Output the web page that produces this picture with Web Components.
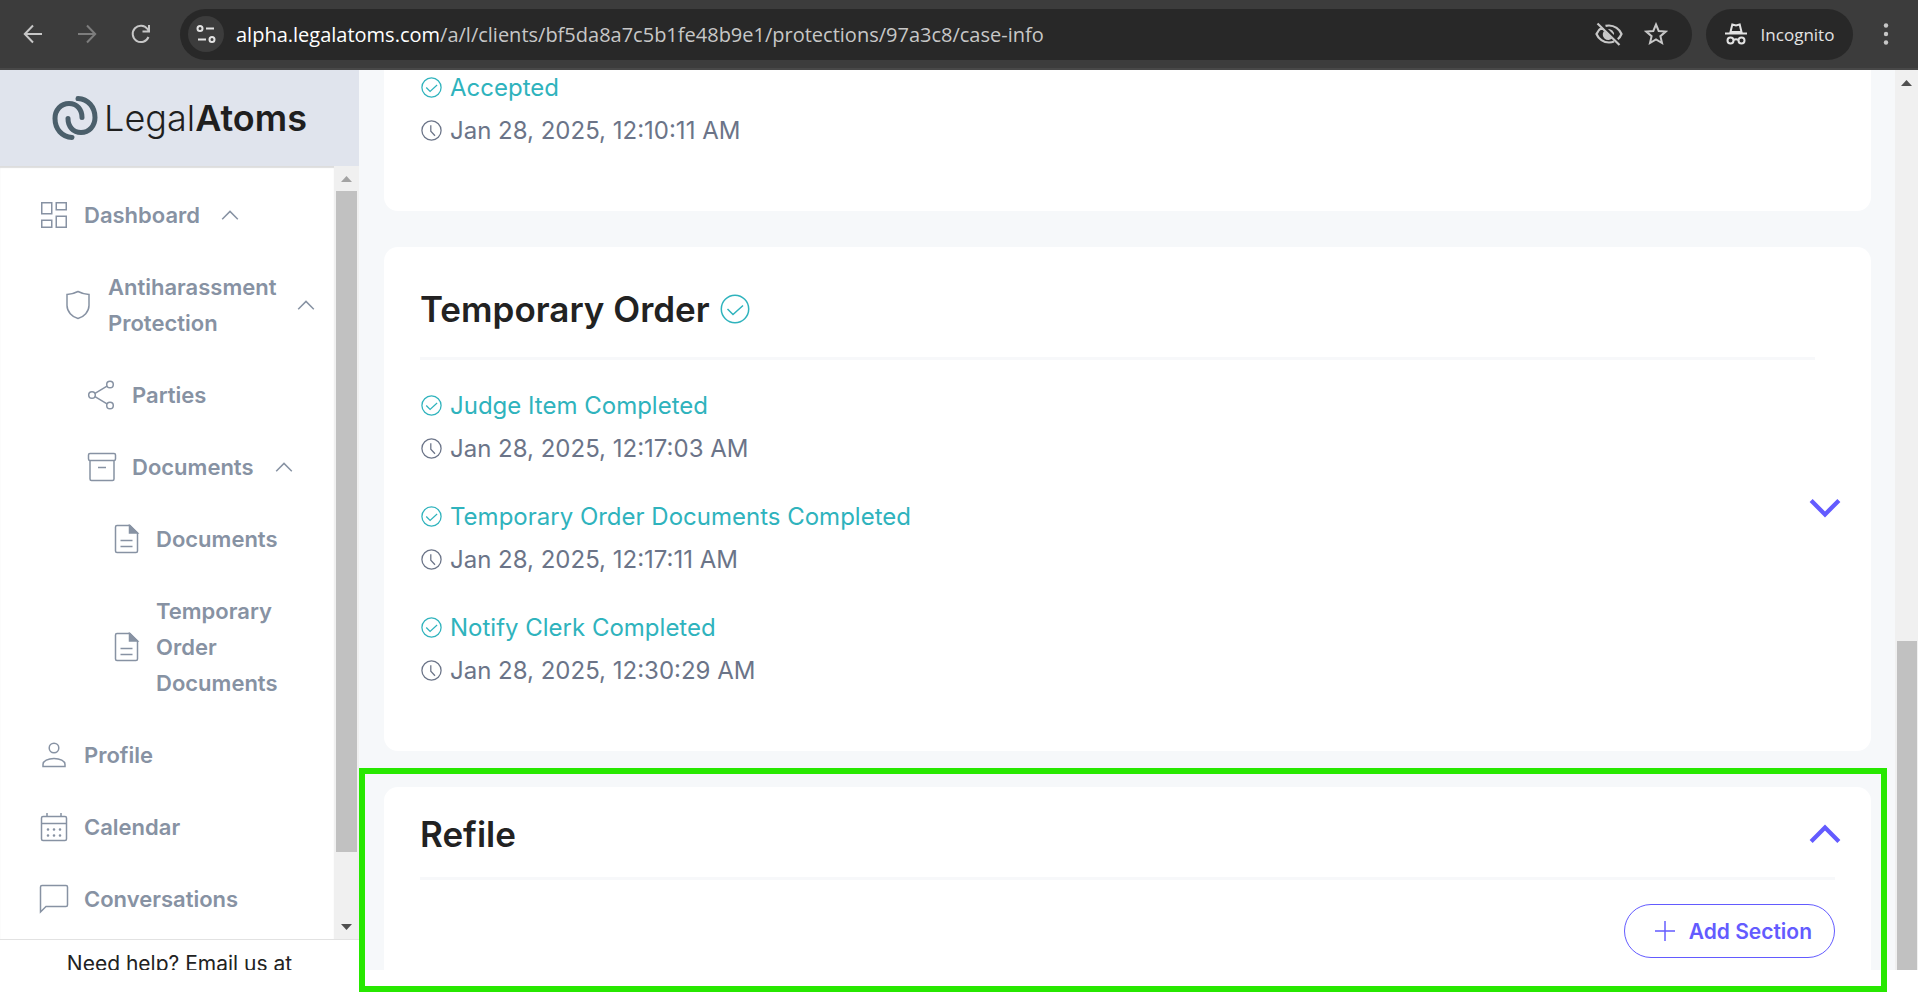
<!DOCTYPE html>
<html lang="en">
<head>
<meta charset="utf-8">
<title>Case info - LegalAtoms</title>
<style>
  html, body {
    margin: 0;
    height: 100%;
  }
  body {
    background: #fff;
    color: #222;
    font-family: Inter, "Liberation Sans", sans-serif;
    font-size: 24px;
    overflow: hidden;
    --teal: #2fb3bd;
    --slate: #6b7488;
    --nav: #8792a3;
    --violet: #635bff;
    --canvas: #f6f8fa;
  }
</style>
</head>
<body>
<app-shell>
  <browser-bar slot="bar"></browser-bar>

  <side-bar slot="side">
    <nav-item icon="dashboard" open>Dashboard</nav-item>
    <nav-item icon="shield" level="1" open>Antiharassment Protection</nav-item>
    <nav-item icon="share" level="2">Parties</nav-item>
    <nav-item icon="archive" level="2" open>Documents</nav-item>
    <nav-item icon="file" level="3">Documents</nav-item>
    <nav-item icon="file" level="3">Temporary Order Documents</nav-item>
    <nav-item icon="person">Profile</nav-item>
    <nav-item icon="calendar">Calendar</nav-item>
    <nav-item icon="chat">Conversations</nav-item>
  </side-bar>

  <status-card>
    <status-entry date="Jan 28, 2025, 12:10:11 AM">Accepted</status-entry>
  </status-card>
  <status-card heading="Temporary Order" done>
    <status-entry date="Jan 28, 2025, 12:17:03 AM">Judge Item Completed</status-entry>
    <status-entry date="Jan 28, 2025, 12:17:11 AM">Temporary Order Documents Completed</status-entry>
    <status-entry date="Jan 28, 2025, 12:30:29 AM">Notify Clerk Completed</status-entry>
  </status-card>
  <section-card heading="Refile">
    <add-button>Add Section</add-button>
  </section-card>
</app-shell>

<script>
const icons = {
  dashboard: `<path d="M2.75 2.75h10v11h-10zM17.25 2.75h10v7h-10zM2.75 20.25h10v7h-10zM17.25 16.25h10v11h-10z"/>`,
  shield: `<path d="M15 1.5c3 1.6 7 2.8 11 3v11c0 6-5 11.5-11 13c-6-1.5-11-7-11-13v-11c4-.2 8-1.4 11-3z"/>`,
  share: `<circle cx="5" cy="15" r="3.3"/><circle cx="23" cy="4.5" r="3.3"/><circle cx="23" cy="25.5" r="3.3"/><path d="M8 13.4l12-7.2M8 16.6l12 7.2"/>`,
  archive: `<rect x="1.5" y="1.5" width="27" height="7" rx="1.5"/><path d="M3 8.5v18.5q0 1.5 1.5 1.5h21q1.5 0 1.5-1.5v-18.5M11 15.5h8"/>`,
  file: `<path d="M19 1.5h-13q-1.5 0-1.5 1.5v24q0 1.5 1.5 1.5h19q1.5 0 1.5-1.5v-18z"/><path d="M18.5 1.5v7.500h8z" fill="currentColor"/><path d="M9.500 16.500h12M9.500 22.500h12"/>`,
  person: `<circle cx="15" cy="8" r="4.8"/><path d="M4 26.5v-2c0-3.5 5-6 11-6s11 2.5 11 6v2z"/>`,
  calendar: `<rect x="2.5" y="4.5" width="25" height="24" rx="1.5"/><path d="M2.5 11.5h25M8 1v3.5M22 1v3.5"/><path d="M9 17.5h.01M15 17.5h.01M21 17.5h.01M9 23.5h.01M15 23.5h.01M21 23.5h.01" stroke-width="2.6" stroke-linecap="round"/>`,
  chat: `<path d="M1.5 28v-25q0-1.5 1.5-1.5h24q1.5 0 1.5 1.5v18q0 1.5-1.5 1.5h-20z"/>`,
  check: `<circle cx="15" cy="15" r="13.7"/><path d="M7.5 15l5.5 5.5l10-9"/>`,
  clock: `<circle cx="15" cy="15" r="13.7"/><path d="M14 7.5v8.5l6 6.5"/>`,
  caret: `<path d="M2 22l13-13l13 13"/>`,
  caretDown: `<path d="M2 8l13 13l13-13"/>`,
  plus: `<path d="M15 0v30M0 15h30"/>`,
};

const icon = (name, size, stroke = 1.5) =>
  `<svg width="${size}" height="${size}" viewBox="0 0 30 30" fill="none" stroke="currentColor" stroke-width="${stroke}" aria-hidden="true">${icons[name]}</svg>`;

// Small base class: render() returns the shadow markup
class BaseElement extends HTMLElement {
  connectedCallback() {
    if (this.shadowRoot) return;
    this.attachShadow({ mode: "open" }).innerHTML = this.render();
  }
}

class AppShell extends BaseElement {
  render() {
    return `
      <style>
        :host {
          display: flex;
          flex-direction: column;
          height: 100vh;
          position: relative;
          --side-width: 359px;
        }
        .page {
          flex: 1;
          min-height: 0;
          display: flex;
          margin-bottom: 23px;
        }
        ::slotted([slot="side"]) {
          flex: 0 0 var(--side-width);
          min-width: 0;
        }
        main {
          flex: 1;
          min-width: 0;
          overflow: hidden;
          background: var(--canvas);
        }
        /* scrolled so that the first card starts above the viewport */
        .stack {
          display: flex;
          flex-direction: column;
          gap: 36px;
          margin: -40px 24px 0 25px;
        }
        .highlight {
          position: absolute;
          left: var(--side-width);
          right: 31px;
          bottom: 1px;
          height: 212px;
          border: 6px solid #27e800;
          pointer-events: none;
        }
      </style>
      <slot name="bar"></slot>
      <div class="page">
        <slot name="side"></slot>
        <main><div class="stack"><slot></slot></div></main>
        <scroll-track style="--from: 546px" wide></scroll-track>
      </div>
      <div class="highlight"></div>
    `;
  }
}

class ScrollTrack extends BaseElement {
  render() {
    const wide = this.hasAttribute("wide");
    return `
      <style>
        :host {
          display: flex;
          flex-direction: column;
          align-items: center;
          flex: 0 0 ${wide ? 23 : 25}px;
          background: #f0f0f0;
        }
        .arrow {
          flex: 0 0 25px;
          display: flex;
          align-items: center;
        }
        .thumb {
          flex: 1;
          width: ${wide ? 20 : 21}px;
          margin: var(--from, 0) 0 var(--thumb-end, 0);
          background: #c1c1c1;
        }
      </style>
      <span class="arrow"><svg width="11" height="6"><path d="M0 6L5.5 0L11 6z" fill="${wide ? "#505050" : "#a3a3a3"}"/></svg></span>
      <span class="thumb"></span>
      ${wide ? "" : `<span class="arrow"><svg width="11" height="6"><path d="M0 0L5.5 6L11 0z" fill="#505050"/></svg></span>`}
    `;
  }
}

class BrowserBar extends BaseElement {
  render() {
    return `
      <style>
        :host {
          display: flex;
          align-items: center;
          flex: 0 0 68px;
          background: #3c3c3c;
          border-bottom: 2px solid #484848;
          color: #c7c7c7;
          font-family: "Open Sans", "Noto Sans", sans-serif;
          font-size: 20px;
        }
        button {
          all: unset;
          display: flex;
          align-items: center;
          justify-content: center;
        }
        .tools {
          display: flex;
          gap: 34px;
          padding: 0 29px 0 23px;
        }
        .forward { color: #7d7d7d; }
        .address {
          flex: 1;
          display: flex;
          align-items: center;
          height: 51px;
          box-sizing: border-box;
          padding: 0 24px 0 8px;
          border-radius: 26px;
          background: #282828;
        }
        .site {
          width: 36px;
          height: 36px;
          border-radius: 50%;
          background: #3c3c3c;
          color: #e3e3e3;
        }
        .url {
          flex: 1;
          padding-left: 12px;
          white-space: nowrap;
        }
        .url b {
          font-weight: 400;
          color: #fff;
        }
        .extras {
          display: flex;
          align-items: center;
          gap: 21px;
        }
        .incognito {
          gap: 14px;
          width: 147px;
          height: 51px;
          margin-left: 14px;
          border-radius: 26px;
          background: #282828;
          color: #e3e3e3;
          font-size: 17px;
        }
        .menu { padding: 0 22px 0 23px; }
      </style>
      <div class="tools">
        <button aria-label="Back"><svg width="20" height="20" viewBox="0 0 20 20" fill="none" stroke="currentColor" stroke-width="2"><path d="M19 10H2M10 1.5L1.8 10L10 18.5"/></svg></button>
        <button class="forward" aria-label="Forward"><svg width="20" height="20" viewBox="0 0 20 20" fill="none" stroke="currentColor" stroke-width="2"><path d="M1 10h17M10 1.5L18.2 10L10 18.5"/></svg></button>
        <button aria-label="Reload"><svg width="20" height="20" viewBox="0 0 20 20" fill="none" stroke="currentColor" stroke-width="2"><path d="M17.5 13A8.2 8.2 0 1 1 16.5 5L18 7M18 1v6.5h-6.5"/></svg></button>
      </div>
      <div class="address">
        <button class="site" aria-label="View site information"><svg width="20" height="20" viewBox="0 0 20 20" fill="none" stroke="currentColor" stroke-width="2"><circle cx="4" cy="4.5" r="2.5"/><path d="M10 4.5h8M2 15.5h8"/><circle cx="16" cy="15.5" r="2.5"/></svg></button>
        <span class="url"><b>alpha.legalatoms.com</b>/a/l/clients/bf5da8a7c5b1fe48b9e1/protections/97a3c8/case-info</span>
        <div class="extras">
          <button aria-label="Third-party cookies blocked"><svg width="28" height="24" viewBox="0 0 28 24" fill="none" stroke="currentColor" stroke-width="2.2"><path d="M7 5.5C4.5 7 2.5 9.500 1.500 12C3.500 17 8.500 20.500 14 20.500c1.800 0 3.500-.3 5-1M10.500 3.900c1.100-.3 2.300-.4 3.500-.4c5.500 0 10.500 3.500 12.500 8.500c-.8 2-2 3.700-3.700 5.200M2.500 1.500l22 21.500"/><path d="M9 9a5.500 5.500 0 0 0 8.500 7zM13 7a5.500 5.500 0 0 1 6 6z" fill="currentColor" stroke="none"/></svg></button>
          <button aria-label="Bookmark this tab"><svg width="24" height="24" viewBox="0 0 24 24" fill="none" stroke="currentColor" stroke-width="2"><path d="M12 2.5l2.7 6.500l7 .6l-5.300 4.600l1.600 6.800l-6-3.600l-6 3.600l1.600-6.800l-5.300-4.600l7-.6z"/></svg></button>
        </div>
      </div>
      <button class="incognito"><svg width="22" height="22" viewBox="0 0 22 22" fill="none" stroke="currentColor" stroke-width="2"><path d="M5.500 9l1.800-7.500l3.700 1l3.700-1l1.800 7.500z"/><path d="M0 10.500h22"/><circle cx="5.500" cy="17.500" r="3"/><circle cx="16.500" cy="17.500" r="3"/><path d="M8.500 17q2.500-1.500 5 0"/></svg>Incognito</button>
      <button class="menu" aria-label="Menu"><svg width="20" height="22" viewBox="0 0 20 22" fill="currentColor"><circle cx="10" cy="2.500" r="2.200"/><circle cx="10" cy="11" r="2.200"/><circle cx="10" cy="19.500" r="2.200"/></svg></button>
    `;
  }
}

class SideBar extends BaseElement {
  render() {
    return `
      <style>
        :host {
          display: flex;
          flex-direction: column;
          background: #fff;
        }
        .logo {
          flex: 0 0 96px;
          display: flex;
          align-items: center;
          justify-content: center;
          gap: 6px;
          background: #e0e4ed;
          color: #1f1f1f;
          font-size: 36px;
          font-weight: 300;
          text-decoration: none;
        }
        .logo b { font-weight: 600; }
        .scroller {
          flex: 1;
          min-height: 0;
          display: flex;
        }
        nav {
          flex: 1;
          min-width: 0;
          overflow: hidden;
          box-sizing: border-box;
          padding: 13px 20px 0 39px;
          box-shadow: inset 0 2px 1px #00000022;
        }
        footer {
          flex: 0 0 30px;
          overflow: hidden;
          border-top: 1px solid #e2e2e2;
          font-size: 21px;
          line-height: 48px;
          text-align: center;
        }
      </style>
      <a class="logo" href="#">
        <svg width="46" height="46" viewBox="0 0 46 46" fill="none" stroke="#4b5f6b" stroke-width="5" stroke-linecap="round" aria-hidden="true"><path d="M26 3.500C36 4 43 12 43 22.500C43 31 37 37.500 29 37.500C21 37.500 16 31.500 16 23.500"/><path d="M20 42.500C10 42 3 34 3 23.500C3 15 9 8.500 17 8.500C25 8.500 30 14.500 30 22.500"/></svg>
        <span>Legal<b>Atoms</b></span>
      </a>
      <div class="scroller">
        <nav><slot></slot></nav>
        <scroll-track style="--thumb-end: 62px"></scroll-track>
      </div>
      <footer>Need help? Email us at</footer>
    `;
  }
}

class NavItem extends BaseElement {
  render() {
    const level = Number(this.getAttribute("level") || 0);
    const caret = this.hasAttribute("open") ? icon("caret", 18, 2.5) : "";
    return `
      <style>
        :host { display: block; }
        a {
          display: flex;
          align-items: center;
          gap: 15px;
          padding: 18px 0 18px ${level * 24}px;
          color: var(--nav);
          font-weight: 600;
          font-size: 22px;
          line-height: 36px;
          text-decoration: none;
        }
        svg { flex: none; }
        span + svg { margin-left: 6px; }
      </style>
      <a href="#">${icon(this.getAttribute("icon"), 30)}<span><slot></slot></span>${caret}</a>
    `;
  }
}

// Shared by both kinds of card
const cardStyles = `
  :host {
    display: grid;
    grid-template-columns: 1fr 20px;
    align-items: center;
    padding: 36px 36px 34px;
    border-radius: 14px;
    background: #fff;
  }
  h2 {
    display: flex;
    align-items: center;
    gap: 10px;
    margin: 0;
    font-size: 35px;
    font-weight: 600;
    line-height: 52px;
  }
  h2 svg { color: var(--teal); }
  hr {
    margin: 0 0 24px;
    border: 0;
    border-top: 3px solid #f7f8fa;
  }
  .toggle {
    all: unset;
    display: flex;
    justify-content: center;
    color: var(--violet);
  }
  .toggle svg { flex: none; }
`;

class StatusCard extends BaseElement {
  render() {
    const heading = this.getAttribute("heading");
    const done = this.hasAttribute("done") ? icon("check", 30, 1.5) : "";
    return `
      <style>
        ${cardStyles}
        h2 { padding-bottom: 22px; }
        .toggle { padding-top: 16px; }
      </style>
      <div>
        ${heading ? `<h2>${heading}${done}</h2><hr>` : ""}
        <slot></slot>
      </div>
      ${heading ? `<button class="toggle" aria-label="Expand ${heading}">${icon("caretDown", 32, 4)}</button>` : ""}
    `;
  }
}

class SectionCard extends BaseElement {
  render() {
    const heading = this.getAttribute("heading");
    return `
      <style>
        ${cardStyles}
        :host { padding-top: 21px; }
        h2 { padding-bottom: 17px; }
        .toggle { padding-bottom: 18px; }
        hr, .actions { grid-column: 1 / -1; }
        hr { justify-self: stretch; }
        .actions {
          display: flex;
          justify-content: flex-end;
        }
      </style>
      <h2>${heading}</h2>
      <button class="toggle" aria-label="Collapse ${heading}">${icon("caret", 32, 4)}</button>
      <hr>
      <div class="actions"><slot></slot></div>
    `;
  }
}

class StatusEntry extends BaseElement {
  render() {
    return `
      <style>
        :host {
          display: block;
          padding-bottom: 25px;
          line-height: 43px;
        }
        div {
          display: flex;
          align-items: center;
          gap: 8px;
          padding-left: 1px;
        }
        .label { color: var(--teal); }
        .date { color: var(--slate); }
      </style>
      <div class="label">${icon("check", 21, 1.8)}<span><slot></slot></span></div>
      <div class="date">${icon("clock", 21, 1.8)}<span>${this.getAttribute("date")}</span></div>
    `;
  }
}

class AddButton extends BaseElement {
  render() {
    return `
      <style>
        :host { display: block; }
        button {
          display: flex;
          align-items: center;
          gap: 14px;
          height: 54px;
          padding: 0 22px 0 30px;
          border: 1px solid var(--violet);
          border-radius: 27px;
          background: #fff;
          color: var(--violet);
          font: 600 21px/1 Inter, sans-serif;
        }
      </style>
      <button>${icon("plus", 20, 2.2)}<span><slot></slot></span></button>
    `;
  }
}

customElements.define("app-shell", AppShell);
customElements.define("scroll-track", ScrollTrack);
customElements.define("browser-bar", BrowserBar);
customElements.define("side-bar", SideBar);
customElements.define("nav-item", NavItem);
customElements.define("status-card", StatusCard);
customElements.define("section-card", SectionCard);
customElements.define("status-entry", StatusEntry);
customElements.define("add-button", AddButton);
</script>
</body>
</html>
